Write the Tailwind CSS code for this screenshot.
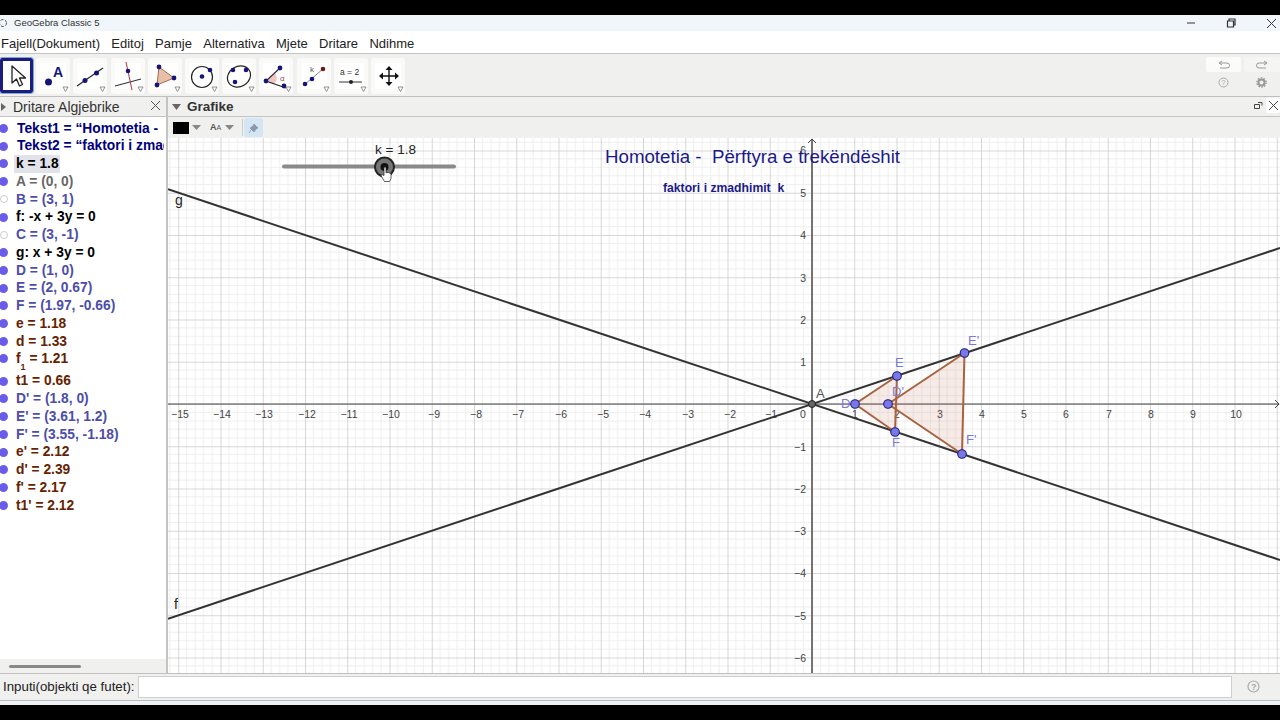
<!DOCTYPE html>
<html>
<head>
<meta charset="utf-8">
<script src="https://cdn.jsdelivr.net/npm/@tailwindcss/browser@4"></script>
</head>
<body class="m-0 w-[1280px] h-[720px] overflow-hidden bg-black font-['Liberation_Sans',Arial,sans-serif] text-[#222]">
<div class="flex flex-col w-[1280px] h-[720px]">
  <div class="h-[15px] bg-black shrink-0"></div>
  <!-- title bar -->
  <div class="h-[16px] shrink-0 bg-[#f1f6fa] flex items-center text-[9.500px] text-[#333] relative">
    <svg width="9" height="10" viewBox="0 0 9 10"><circle cx="3" cy="5" r="3.500" fill="none" stroke="#555" stroke-width="1" stroke-dasharray="3 1.500"/></svg>
    <span class="ml-[5px]">GeoGebra Classic 5</span>
    <div class="ml-auto flex items-center h-full">
      <svg width="10" height="10" viewBox="0 0 10 10" class="mr-[30px]"><path d="M1 5h8" stroke="#333" stroke-width="1"/></svg>
      <svg width="10" height="10" viewBox="0 0 10 10" class="mr-[30px]"><path d="M1.500 3h6v6h-6zM3 3V1h6v6H7.500" fill="none" stroke="#333" stroke-width="1.200"/></svg>
      <svg width="11" height="11" viewBox="0 0 11 11" class="mr-[3px]"><path d="M1 1l9 9M10 1l-9 9" stroke="#333" stroke-width="1"/></svg>
    </div>
  </div>
  <!-- menu -->
  <div class="h-[23px] shrink-0 bg-white border-b border-[#c4c4c4] flex items-center text-[13px] gap-[11.300px] pl-[1px] pt-[3px] text-[#222]">
    <span>Fajell(Dokument)</span><span>Editoj</span><span>Pamje</span><span>Alternativa</span><span>Mjete</span><span>Dritare</span><span>Ndihme</span>
  </div>
  <!-- toolbar -->
  <div class="h-[43px] shrink-0 bg-[#f0f0ee] border-b border-[#c0c0c0] flex items-center relative">
    <div class="flex items-center gap-[3.200px] pt-[1px]">
      <div class="w-[33px] h-[35px] border-[3px] border-[#1c1c80] rounded-[2px] bg-white flex items-center justify-center relative outline outline-[1px] outline-[#7fa8cf]">
        <svg width="24" height="28" viewBox="0 0 24 28"><path d="M7 4v17l4.500-4 3 7 3-1.500-3-6.500h6z" fill="#fff" stroke="#222" stroke-width="1.300" stroke-linejoin="round"/></svg>
      </div>
      <div class="w-[34px] h-[36px] rounded-[3px] bg-[#fafaf8] relative"><svg width="34" height="36" viewBox="0 0 34 36"><rect x="4" y="5" width="26" height="26" fill="#fff"/><circle cx="12.500" cy="24" r="3.500" fill="#14147a"/><text x="17" y="19" font-size="14" font-weight="bold" fill="#14147a" font-family="Liberation Sans">A</text><path d="M27 29h5l-2.500 4.500z" fill="#fff" stroke="#777" stroke-width=".8"/></svg></div>
      <div class="w-[34px] h-[36px] rounded-[3px] bg-[#fafaf8] relative"><svg width="34" height="36" viewBox="0 0 34 36"><rect x="4" y="5" width="26" height="26" fill="#fff"/><path d="M4 28L30 10" stroke="#222" stroke-width="1.100"/><circle cx="12" cy="22.500" r="2.500" fill="#14147a"/><circle cx="23.500" cy="15" r="2.500" fill="#14147a"/><path d="M27 29h5l-2.500 4.500z" fill="#fff" stroke="#777" stroke-width=".8"/></svg></div>
      <div class="w-[34px] h-[36px] rounded-[3px] bg-[#fafaf8] relative"><svg width="34" height="36" viewBox="0 0 34 36"><rect x="4" y="5" width="26" height="26" fill="#fff"/><path d="M4 28L30 21" stroke="#333" stroke-width="1.100"/><path d="M15 4l6 28" stroke="#b04050" stroke-width="1.100"/><circle cx="17" cy="13" r="2.300" fill="#14147a"/><path d="M27 29h5l-2.500 4.500z" fill="#fff" stroke="#777" stroke-width=".8"/></svg></div>
      <div class="w-[34px] h-[36px] rounded-[3px] bg-[#fafaf8] relative"><svg width="34" height="36" viewBox="0 0 34 36"><rect x="4" y="5" width="26" height="26" fill="#fff"/><path d="M11 9L26 20L9 27z" fill="#e8bfa8" stroke="#a86a4a" stroke-width="1"/><circle cx="11" cy="9" r="2.400" fill="#14147a"/><circle cx="26" cy="20" r="2.400" fill="#14147a"/><circle cx="9" cy="27" r="2.400" fill="#14147a"/><path d="M27 29h5l-2.500 4.500z" fill="#fff" stroke="#777" stroke-width=".8"/></svg></div>
      <div class="w-[34px] h-[36px] rounded-[3px] bg-[#fafaf8] relative"><svg width="34" height="36" viewBox="0 0 34 36"><rect x="4" y="5" width="26" height="26" fill="#fff"/><circle cx="17" cy="19" r="10.500" fill="none" stroke="#222" stroke-width="1.200"/><circle cx="17" cy="18.500" r="2.300" fill="#14147a"/><circle cx="25" cy="12" r="2.300" fill="#14147a"/><path d="M27 29h5l-2.500 4.500z" fill="#fff" stroke="#777" stroke-width=".8"/></svg></div>
      <div class="w-[34px] h-[36px] rounded-[3px] bg-[#fafaf8] relative"><svg width="34" height="36" viewBox="0 0 34 36"><rect x="4" y="5" width="26" height="26" fill="#fff"/><ellipse cx="17" cy="18.500" rx="12" ry="10" transform="rotate(-30 17 18.500)" fill="none" stroke="#222" stroke-width="1.200"/><circle cx="11" cy="12" r="2.300" fill="#14147a"/><circle cx="24" cy="12" r="2.300" fill="#14147a"/><circle cx="13" cy="24" r="2.300" fill="#14147a"/><path d="M27 29h5l-2.500 4.500z" fill="#fff" stroke="#777" stroke-width=".8"/></svg></div>
      <div class="w-[34px] h-[36px] rounded-[3px] bg-[#fafaf8] relative"><svg width="34" height="36" viewBox="0 0 34 36"><rect x="4" y="5" width="26" height="26" fill="#fff"/><path d="M9 22L14 26.500A7 7 0 0 0 16 15.500z" fill="#f2c4c4"/><path d="M21 10L7 23L27 30" fill="none" stroke="#222" stroke-width="1.100"/><circle cx="21" cy="10" r="2.400" fill="#14147a"/><circle cx="7" cy="23" r="2.400" fill="#14147a"/><circle cx="25" cy="28" r="2.400" fill="#14147a"/><text x="21" y="23" font-size="8" fill="#b04050" font-family="Liberation Sans">α</text><path d="M27 29h5l-2.500 4.500z" fill="#fff" stroke="#777" stroke-width=".8"/></svg></div>
      <div class="w-[34px] h-[36px] rounded-[3px] bg-[#fafaf8] relative"><svg width="34" height="36" viewBox="0 0 34 36"><rect x="4" y="5" width="26" height="26" fill="#fff"/><path d="M7 27L26 11" stroke="#666" stroke-width=".8"/><circle cx="8" cy="26" r="2.300" fill="#14147a"/><circle cx="15" cy="21" r="2.300" fill="#14147a"/><circle cx="26" cy="11" r="2.300" fill="#7a1414"/><text x="13" y="14" font-size="8" fill="#555" font-family="Liberation Sans">k</text><path d="M27 29h5l-2.500 4.500z" fill="#fff" stroke="#777" stroke-width=".8"/></svg></div>
      <div class="w-[34px] h-[36px] rounded-[3px] bg-[#fafaf8] relative"><svg width="34" height="36" viewBox="0 0 34 36"><rect x="4" y="5" width="26" height="26" fill="#fff"/><text x="6" y="17" font-size="8.500" fill="#333" font-family="Liberation Sans">a = 2</text><path d="M5 24h23" stroke="#333" stroke-width="1"/><circle cx="17" cy="24" r="2" fill="#222"/><path d="M27 29h5l-2.500 4.500z" fill="#fff" stroke="#777" stroke-width=".8"/></svg></div>
      <div class="w-[34px] h-[36px] rounded-[3px] bg-[#fafaf8] relative"><svg width="34" height="36" viewBox="0 0 34 36"><rect x="4" y="5" width="26" height="26" fill="#fff"/><path d="M18 10v16M10 18h16" stroke="#111" stroke-width="1.400"/><path d="M18 8l-3.500 4h7zM18 28l-3.500-4h7zM8 18l4-3.500v7zM28 18l-4-3.500v7z" fill="#111"/><path d="M27 29h5l-2.500 4.500z" fill="#fff" stroke="#777" stroke-width=".8"/></svg></div>
    </div>
    <div class="absolute left-[1206px] top-[3px] w-[35px] h-[15px] bg-[#fbfbfa] rounded-[2px] flex items-center justify-center"><svg width="14" height="10" viewBox="0 0 14 10"><path d="M5 1L2 3l3 2M2 3h8a2.500 2.500 0 0 1 0 5H3" fill="none" stroke="#999" stroke-width="1"/></svg></div>
    <div class="absolute left-[1244px] top-[3px] w-[36px] h-[15px] bg-[#f5f5f3] rounded-[2px] flex items-center justify-center"><svg width="14" height="10" viewBox="0 0 14 10"><path d="M9 1l3 2-3 2M12 3H4a2.500 2.500 0 0 0 0 5h7" fill="none" stroke="#999" stroke-width="1"/></svg></div>
    <svg class="absolute left-[1218px] top-[23px]" width="11" height="11" viewBox="0 0 11 11"><circle cx="5.500" cy="5.500" r="4.500" fill="none" stroke="#aaa" stroke-width="1"/><text x="3.500" y="8" font-size="7" fill="#aaa" font-family="Liberation Sans">?</text></svg>
    <svg class="absolute left-[1256px] top-[23px]" width="11" height="11" viewBox="0 0 11 11"><circle cx="5.500" cy="5.500" r="3" fill="none" stroke="#999" stroke-width="2"/><circle cx="5.500" cy="5.500" r="4.600" fill="none" stroke="#999" stroke-width="1.400" stroke-dasharray="1.500 1.400"/></svg>
  </div>
  <!-- main -->
  <div class="flex flex-1 min-h-0 bg-[#f0f0ee]">
    <!-- algebra -->
    <div class="w-[168px] shrink-0 flex flex-col border-r-2 border-[#c4c4c4] overflow-hidden">
      <div class="h-[20px] shrink-0 flex items-center border-b border-[#c4c4c4] relative text-[14px] text-[#333] pt-[1px]">
        <svg width="5" height="8" viewBox="0 0 5 8" class="ml-[1px]"><path d="M0 0l5 4-5 4z" fill="#666"/></svg>
        <span class="ml-[7px]">Dritare Algjebrike</span>
        <svg class="absolute left-[150px] top-[3px]" width="11" height="11" viewBox="0 0 11 11"><path d="M1 1l9 9M10 1l-9 9" stroke="#555" stroke-width="1"/></svg>
      </div>
      <div class="flex-1 bg-white font-bold text-[13.800px] leading-[17.750px] pt-[2.500px] overflow-hidden whitespace-nowrap min-h-0">
        <div class="h-[17.750px] w-[164px] overflow-hidden flex items-center text-[#00007c]"><i class="w-[9px] h-[9px] -ml-[1px] rounded-full bg-[#6a5ce8] mr-[9px] shrink-0"></i>Tekst1 = “Homotetia -</div>
        <div class="h-[17.750px] w-[164px] overflow-hidden flex items-center text-[#00007c]"><i class="w-[9px] h-[9px] -ml-[1px] rounded-full bg-[#6a5ce8] mr-[9px] shrink-0"></i>Tekst2 = “faktori i zmadhimit</div>
        <div class="h-[17.750px] flex items-center text-black"><i class="w-[9px] h-[9px] -ml-[1px] rounded-full bg-[#6a5ce8] mr-[6px] shrink-0"></i><span class="bg-[#e2e2ea] px-[2px] w-[46px]">k = 1.8</span></div>
        <div class="h-[17.750px] flex items-center text-[#666666]"><i class="w-[9px] h-[9px] -ml-[1px] rounded-full bg-[#6a5ce8] mr-[8px] shrink-0"></i>A = (0, 0)</div>
        <div class="h-[17.750px] flex items-center text-[#4d4da8]"><i class="w-[8px] h-[8px] rounded-full bg-white border border-[#ccc] mr-[8px] shrink-0"></i>B = (3, 1)</div>
        <div class="h-[17.750px] flex items-center text-black"><i class="w-[9px] h-[9px] -ml-[1px] rounded-full bg-[#6a5ce8] mr-[8px] shrink-0"></i>f: -x + 3y = 0</div>
        <div class="h-[17.750px] flex items-center text-[#4d4da8]"><i class="w-[8px] h-[8px] rounded-full bg-white border border-[#ccc] mr-[8px] shrink-0"></i>C = (3, -1)</div>
        <div class="h-[17.750px] flex items-center text-black"><i class="w-[9px] h-[9px] -ml-[1px] rounded-full bg-[#6a5ce8] mr-[8px] shrink-0"></i>g: x + 3y = 0</div>
        <div class="h-[17.750px] flex items-center text-[#4d4da8]"><i class="w-[9px] h-[9px] -ml-[1px] rounded-full bg-[#6a5ce8] mr-[8px] shrink-0"></i>D = (1, 0)</div>
        <div class="h-[17.750px] flex items-center text-[#4d4da8]"><i class="w-[9px] h-[9px] -ml-[1px] rounded-full bg-[#6a5ce8] mr-[8px] shrink-0"></i>E = (2, 0.67)</div>
        <div class="h-[17.750px] flex items-center text-[#4d4da8]"><i class="w-[9px] h-[9px] -ml-[1px] rounded-full bg-[#6a5ce8] mr-[8px] shrink-0"></i>F = (1.97, -0.66)</div>
        <div class="h-[17.750px] flex items-center text-[#662200]"><i class="w-[9px] h-[9px] -ml-[1px] rounded-full bg-[#6a5ce8] mr-[8px] shrink-0"></i>e = 1.18</div>
        <div class="h-[17.750px] flex items-center text-[#662200]"><i class="w-[9px] h-[9px] -ml-[1px] rounded-full bg-[#6a5ce8] mr-[8px] shrink-0"></i>d = 1.33</div>
        <div class="h-[22px] flex items-start text-[#662200]"><i class="w-[9px] h-[9px] -ml-[1px] rounded-full bg-[#6a5ce8] mr-[8px] mt-[4px] shrink-0"></i><span>f<sub class="text-[9px] align-[-4px] leading-none">1</sub> = 1.21</span></div>
        <div class="h-[17.750px] flex items-center text-[#662200]"><i class="w-[9px] h-[9px] -ml-[1px] rounded-full bg-[#6a5ce8] mr-[8px] shrink-0"></i>t1 = 0.66</div>
        <div class="h-[17.750px] flex items-center text-[#4d4da8]"><i class="w-[9px] h-[9px] -ml-[1px] rounded-full bg-[#6a5ce8] mr-[8px] shrink-0"></i>D' = (1.8, 0)</div>
        <div class="h-[17.750px] flex items-center text-[#4d4da8]"><i class="w-[9px] h-[9px] -ml-[1px] rounded-full bg-[#6a5ce8] mr-[8px] shrink-0"></i>E' = (3.61, 1.2)</div>
        <div class="h-[17.750px] flex items-center text-[#4d4da8]"><i class="w-[9px] h-[9px] -ml-[1px] rounded-full bg-[#6a5ce8] mr-[8px] shrink-0"></i>F' = (3.55, -1.18)</div>
        <div class="h-[17.750px] flex items-center text-[#662200]"><i class="w-[9px] h-[9px] -ml-[1px] rounded-full bg-[#6a5ce8] mr-[8px] shrink-0"></i>e' = 2.12</div>
        <div class="h-[17.750px] flex items-center text-[#662200]"><i class="w-[9px] h-[9px] -ml-[1px] rounded-full bg-[#6a5ce8] mr-[8px] shrink-0"></i>d' = 2.39</div>
        <div class="h-[17.750px] flex items-center text-[#662200]"><i class="w-[9px] h-[9px] -ml-[1px] rounded-full bg-[#6a5ce8] mr-[8px] shrink-0"></i>f' = 2.17</div>
        <div class="h-[17.750px] flex items-center text-[#662200]"><i class="w-[9px] h-[9px] -ml-[1px] rounded-full bg-[#6a5ce8] mr-[8px] shrink-0"></i>t1' = 2.12</div>
      </div>
      <div class="h-[14px] shrink-0 bg-[#f0f0ee] flex items-center pl-[9px]"><div class="w-[72px] h-[3px] rounded-full bg-[#888]"></div></div>
    </div>
    <!-- graphics -->
    <div class="flex-1 flex flex-col min-w-0">
      <div class="h-[20px] shrink-0 flex items-center border-b border-[#c4c4c4] relative font-bold text-[13.500px] text-[#333] pt-[1px]">
        <svg width="9" height="6" viewBox="0 0 9 6" class="ml-[4px]"><path d="M0 0h9L4.500 6z" fill="#666"/></svg>
        <span class="ml-[6px]">Grafike</span>
        <svg class="absolute left-[1086px] top-[4px]" width="9" height="9" viewBox="0 0 9 9"><path d="M.5 3.500h5v4h-5zM4 1.500h4v3" fill="none" stroke="#444" stroke-width="1"/></svg>
        <div class="absolute left-[1098px] top-[1px] w-[14px] h-[15px] bg-white rounded-[2px] flex items-center justify-center"><svg width="11" height="11" viewBox="0 0 11 11"><path d="M1 1l9 9M10 1l-9 9" stroke="#444" stroke-width="1"/></svg></div>
      </div>
      <div class="h-[21px] shrink-0 flex items-center relative">
        <div class="ml-[5px] w-[16px] h-[12px] bg-black"></div>
        <svg class="ml-[3px]" width="9" height="5" viewBox="0 0 9 5"><path d="M0 0h9L4.500 5z" fill="#888"/></svg>
        <span class="ml-[9px] text-[9px] font-bold text-[#555]">A<span class="text-[7px] font-normal">A</span></span>
        <svg class="ml-[4px]" width="9" height="5" viewBox="0 0 9 5"><path d="M0 0h9L4.500 5z" fill="#888"/></svg>
        <div class="ml-[8px] w-px h-[17px] bg-[#ccc]"></div>
        <div class="ml-[1px] w-[19px] h-[19px] bg-[#d4e6f4] rounded-[2px] flex items-center justify-center"><svg width="12" height="12" viewBox="0 0 12 12"><path d="M6 2l4 4-2 1-2 3-4-4 3-2zM3 8l-2 3" fill="#8a98a8" stroke="#8a98a8" stroke-width=".8"/></svg></div>
      </div>
      <svg class="flex-1 min-h-0 block bg-white" width="1112" height="535" viewBox="168 138 1112 535" font-family="Liberation Sans">
        <defs>
          <pattern id="grid" patternUnits="userSpaceOnUse" x="812" y="404" width="42.25" height="42.25">
            <path d="M8.450 0V42.250M16.900 0V42.250M25.350 0V42.250M33.800 0V42.250M0 8.450H42.250M0 16.900H42.250M0 25.350H42.250M0 33.800H42.250" stroke="#eeeeee" stroke-width="1" fill="none"/>
            <path d="M0 0V42.250M0 0H42.250" stroke="#cacaca" stroke-width="1.500" fill="none"/>
          </pattern>
        </defs>
        <rect x="168" y="138" width="1112" height="535" fill="url(#grid)"/>
        <!-- axes -->
        <path d="M168 404H1279" stroke="#444" stroke-width="1.200" fill="none"/>
        <path d="M812 139v534" stroke="#666" stroke-width="1.800" fill="none"/>
        <path d="M808 143l4-4 4 4M1275 400l4 4-4 4" stroke="#444" fill="none"/>
        <g fill="#444" font-size="10.500" text-anchor="middle">
          <text x="180" y="418">−15</text><text x="222" y="418">−14</text><text x="264" y="418">−13</text><text x="307" y="418">−12</text><text x="349" y="418">−11</text><text x="391" y="418">−10</text><text x="434" y="418">−9</text><text x="476" y="418">−8</text><text x="518" y="418">−7</text><text x="561" y="418">−6</text><text x="603" y="418">−5</text><text x="645" y="418">−4</text><text x="688" y="418">−3</text><text x="730" y="418">−2</text><text x="771" y="418">−1</text>
          <text x="855" y="418">1</text><text x="897" y="418">2</text><text x="940" y="418">3</text><text x="982" y="418">4</text><text x="1024" y="418">5</text><text x="1066" y="418">6</text><text x="1109" y="418">7</text><text x="1151" y="418">8</text><text x="1193" y="418">9</text><text x="1236" y="418">10</text>
          <text x="803" y="418">0</text>
        </g>
        <g fill="#444" font-size="10.500" text-anchor="end">
          <text x="806" y="154">6</text><text x="806" y="197">5</text><text x="806" y="239">4</text><text x="806" y="282">3</text><text x="806" y="324">2</text><text x="806" y="366">1</text>
          <text x="806" y="451">−1</text><text x="806" y="493">−2</text><text x="806" y="535">−3</text><text x="806" y="577">−4</text><text x="806" y="620">−5</text><text x="806" y="662">−6</text>
        </g>
        <!-- lines -->
        <path d="M168 618.700L1280 248" stroke="#333" stroke-width="2"/>
        <path d="M168 189.300L1280 560" stroke="#333" stroke-width="2"/>
        <text x="175" y="205" font-size="14" fill="#222">g</text>
        <text x="174" y="609" font-size="14" fill="#222">f</text>
        <!-- triangles -->
        <path d="M855 404L897 376L895 432Z" fill="#c9735a" fill-opacity=".14" stroke="#a8623f" stroke-width="2" stroke-linejoin="round"/>
        <path d="M888 404L964.500 353L962 454Z" fill="#c9735a" fill-opacity=".14" stroke="#a8623f" stroke-width="2" stroke-linejoin="round"/>
        <!-- points -->
        <g stroke="#1c1c80" stroke-width="1.100" fill="#7a78e6">
          <circle cx="855" cy="404" r="4.300"/><circle cx="897" cy="376" r="4.300"/><circle cx="895" cy="432" r="4.300"/><circle cx="888" cy="404" r="4.300"/><circle cx="964.500" cy="353" r="4.300"/><circle cx="962" cy="454" r="4.300"/>
        </g>
        <circle cx="812" cy="404" r="3.500" fill="#666" stroke="#222" stroke-width="1"/>
        <g fill="#7a78d8" font-size="13">
          <text x="841" y="408">D</text><text x="895" y="367">E</text><text x="892" y="447">F</text><text x="892" y="396">D'</text><text x="968" y="345">E'</text><text x="966" y="444">F'</text>
        </g>
        <text x="816" y="398" font-size="13" fill="#555">A</text>
        <!-- headings -->
        <text x="605" y="163" font-size="18.700" fill="#1a1a8c" xml:space="preserve">Homotetia -  Përftyra e trekëndëshit</text>
        <text x="663" y="192" font-size="12.200" font-weight="bold" fill="#1a1a8c" xml:space="preserve">faktori i zmadhimit  k</text>
        <!-- slider -->
        <path d="M284 166.500H454" stroke="#8a8a8a" stroke-width="4" stroke-linecap="round"/>
        <circle cx="384.500" cy="167" r="9.500" fill="#777" stroke="#222" stroke-width="2"/>
        <circle cx="384.500" cy="167" r="4" fill="#111"/>
        <text x="375" y="154" font-size="13.500" fill="#222">k = 1.8</text>
        <path d="M384 173v-5a1 1 0 0 1 2 0v5l1-.5h1.500l1 .5 1 .5 .5 1v4l-1.500 3h-5l-3-5-.5-1.500 1-.5 2 1z" fill="#fff" stroke="#333" stroke-width=".8"/>
      </svg>
    </div>
  </div>
  <!-- input bar -->
  <div class="h-[27px] shrink-0 bg-[#f0f0ee] border-t border-[#c0c0c0] flex items-center text-[13.300px] text-[#222] pl-[3px] relative">
    <span>Inputi(objekti qe futet):</span>
    <div class="ml-[3px] w-[1094px] h-[22px] bg-white border border-[#cfcfcf]"></div>
    <svg class="absolute left-[1247px] top-[6px]" width="13" height="13" viewBox="0 0 13 13"><circle cx="6.500" cy="6.500" r="5.500" fill="none" stroke="#aaa" stroke-width="1.200"/><text x="4" y="10" font-size="9" font-weight="bold" fill="#aaa" font-family="Liberation Sans">?</text></svg>
  </div>
  <div class="h-[5px] shrink-0 bg-[#eef3f8] border-t border-[#bbb]"></div>
  <div class="h-[15px] shrink-0 bg-black"></div>
</div>
</body>
</html>
